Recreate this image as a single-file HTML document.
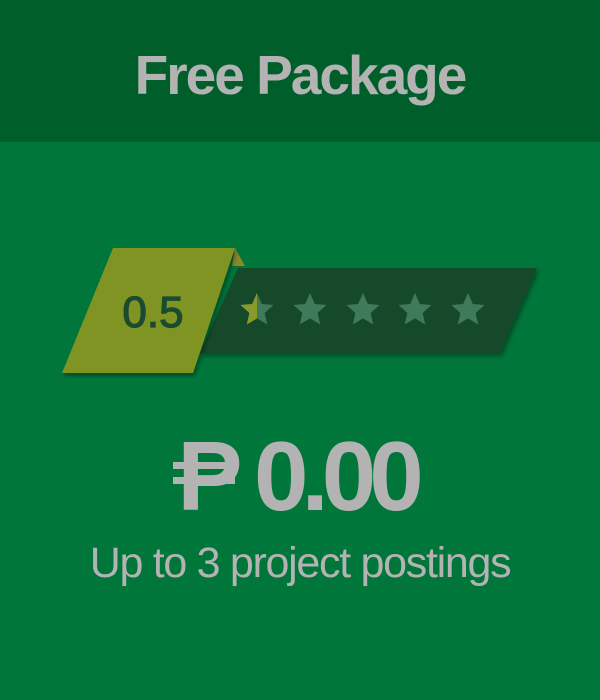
<!DOCTYPE html>
<html><head><style>
body{margin:0;width:600px;height:700px;background:#00763a;font-family:"Liberation Sans",sans-serif;overflow:hidden;position:relative}
.hd{position:absolute;left:0;top:0;width:600px;height:142px;background:#005e2a}
.t{position:absolute;left:0;width:600px;text-align:center;color:#b3b3b3;white-space:nowrap}
</style></head><body>
<div class="hd"></div>
<div class="t" style="top:40px;font-size:55px;font-weight:bold;letter-spacing:-2px;line-height:70px;padding-right:3px">Free Package</div>
<svg style="position:absolute;left:0;top:0" width="600" height="700">
<defs><filter id="s"><feDropShadow dx="2" dy="3" stdDeviation="2" flood-opacity="0.35"/></filter></defs>
<polygon points="238,268 537,268 500,353 200,353" fill="#164a2c" filter="url(#s)"/>
<polygon points="235,248 245,266 232,266" fill="#8a8a2a"/>
<polygon points="113,248 235,248 193,373 62,373" fill="#7f9424" filter="url(#s)"/>
<text x="153" y="327" font-family="Liberation Sans" font-size="44" fill="#1a4a30" stroke="#1a4a30" stroke-width="1.2" text-anchor="middle">0.5</text>
<defs><path id="st" d="M0,-17 L4.8,-6 L16.5,-5 L7.6,3 L10.2,14.5 L0,8.4 L-10.2,14.5 L-7.6,3 L-16.5,-5 L-4.8,-6Z"/>
<clipPath id="h"><rect x="-20" y="-20" width="20" height="40"/></clipPath></defs>
<g fill="#3f7a5a">
<use href="#st" x="257" y="310"/><use href="#st" x="310" y="310"/><use href="#st" x="363" y="310"/><use href="#st" x="415" y="310"/><use href="#st" x="468" y="310"/>
</g>
<g transform="translate(257,310)"><use href="#st" fill="#8a9a2a" clip-path="url(#h)"/></g>
</svg>
<div class="t" style="top:426px;font-size:98px;font-weight:bold;letter-spacing:-7px;line-height:100px;padding-left:0px;width:594px">P 0.00</div>
<div style="position:absolute;left:173px;top:462px;width:62px;height:7px;background:#b3b3b3"></div>
<div style="position:absolute;left:173px;top:477px;width:62px;height:7px;background:#b3b3b3"></div>
<div class="t" style="top:538px;font-size:43px;letter-spacing:-1.3px;line-height:50px">Up to 3 project postings</div>
</body></html>
